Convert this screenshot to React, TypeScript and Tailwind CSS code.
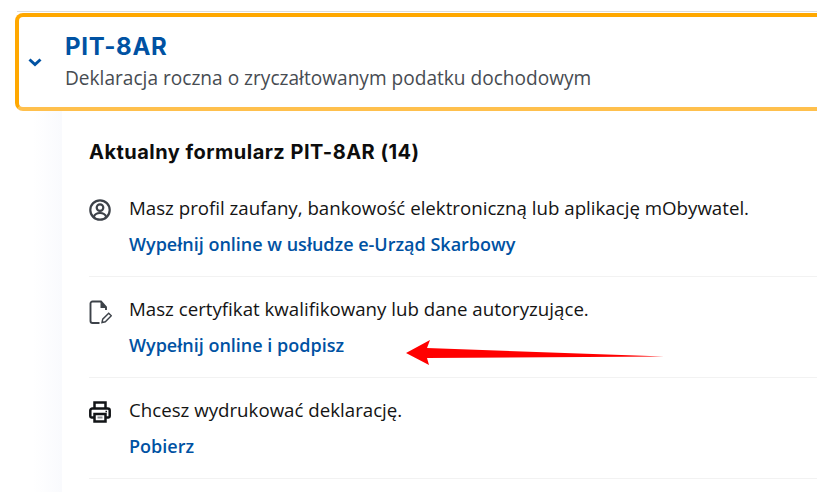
import React from 'react';

const body = "font-['Open_Sans',sans-serif]";

const Row: React.FC<{ icon: React.ReactNode; text: string; link: string }> = ({ icon, text, link }) => (
    <div className="flex border-b border-[#f2f2f2] h-[101px] pt-[19px]">
        <div className="w-[40px] pt-[4px] shrink-0">{icon}</div>
        <div>
            <p className="text-[18.7px] leading-[25px] text-[#141414]">{text}</p>
            <a className="block mt-[12px] text-[18px] leading-[25px] font-semibold text-[#0052a3]">{link}</a>
        </div>
    </div>
);

const ProfileIcon = () => (
    <svg width="22" height="22" viewBox="0 0 22 22" fill="none" stroke="#3d4249" strokeWidth="2.200">
        <circle cx="11" cy="11" r="9.700" />
        <circle cx="11" cy="8.600" r="3.300" />
        <path d="M4.800 17.800c1-2.800 3.200-3.800 6.200-3.800s5.200 1 6.200 3.800" />
    </svg>
);

const DocIcon = () => (
    <svg width="24" height="24" viewBox="0 0 24 24" fill="none" className="ml-[-1px]">
        <path d="M18 10V7L13 1.500H4.500a2 2 0 0 0-2 2V21a2 2 0 0 0 2 2h7" stroke="#3d4249" strokeWidth="1.900" />
        <path d="M12.500 1.500V8H18.500z" fill="#3d4249" />
        <path d="M14 22.500l.7-3.300 6-6 2.600 2.600-6 6z" stroke="#3d4249" strokeWidth="1.400" />
    </svg>
);

const PrintIcon = () => (
    <svg width="22" height="22" viewBox="0 0 22 22" fill="none" stroke="#121417" strokeWidth="2.500">
        <path d="M5.500 7V1.500h11V7" />
        <path d="M5.500 16.500H2.500a1.200 1.200 0 0 1-1.200-1.200V9.500a2 2 0 0 1 2-2h15.400a2 2 0 0 1 2 2v5.800a1.200 1.200 0 0 1-1.200 1.200h-3" />
        <path d="M5.500 13h11v7.500h-11z" />
        <path d="M8.500 16.500h5" stroke="#8a8d91" strokeWidth="2" />
        <path d="M16.500 10.500h1.500" strokeWidth="1.500" />
    </svg>
);

export default function App() {
    return (
        <div className={`w-[817px] h-[492px] overflow-hidden bg-white pt-[11px] ${body}`}>
            <div className="border-t border-[#dcdcdc] h-[2px] ml-[17px]" />
            <div className="ml-[15px] w-[830px] h-[98px] border-[4px] border-[#ffa800] border-b-[#ffc04d] rounded-[8px] flex items-center">
                <svg width="14" height="9" viewBox="0 0 14 9" className="ml-[9px] shrink-0" fill="none" stroke="#0052a3" strokeWidth="3">
                    <path d="M1.500 1.500l5.500 5 5.500-5" />
                </svg>
                <div className="ml-[23px]">
                    <h2 className="font-['Inter',sans-serif] text-[24px] leading-[30px] font-bold tracking-[0.7px] text-[#0052a3] mt-[-1px]">PIT-8AR</h2>
                    <p className="mt-[4px] text-[19.1px] leading-[25px] text-[#474c52]">Deklaracja roczna o zryczałtowanym podatku dochodowym</p>
                </div>
            </div>
            <div className="ml-[33px] flex">
                <div className="w-[29px] h-[400px] bg-gradient-to-r from-white to-[#f9fafd]" />
                <div className="w-[755px] pl-[27px] pt-[28px]">
                    <h3 className="font-['Inter',sans-serif] text-[20px] leading-[26px] font-bold tracking-[0.48px] text-[#0d0d0d]">Aktualny formularz PIT-8AR (14)</h3>
                    <div className="mt-[11px]">
                        <Row icon={<ProfileIcon />} text="Masz profil zaufany, bankowość elektroniczną lub aplikację mObywatel." link="Wypełnij online w usłudze e-Urząd Skarbowy" />
                        <Row icon={<DocIcon />} text="Masz certyfikat kwalifikowany lub dane autoryzujące." link="Wypełnij online i podpisz" />
                        <Row icon={<PrintIcon />} text="Chcesz wydrukować deklarację." link="Pobierz" />
                    </div>
                </div>
            </div>
            <svg className="absolute left-[400px] top-[330px]" width="280" height="50" viewBox="0 0 280 50">
                <path d="M6 23L30 10L27 18L264 26.500L27 28L29 35z" fill="#ff0000" />
            </svg>
        </div>
    );
}
